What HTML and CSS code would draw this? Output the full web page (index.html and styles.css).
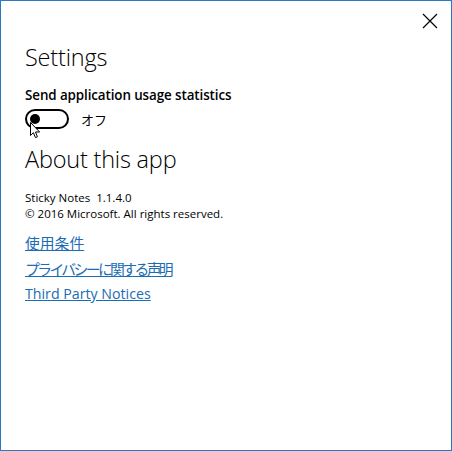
FILE: index.html
```html
<!DOCTYPE html>
<html lang="ja">
<head>
<meta charset="utf-8">
<link rel="stylesheet" href="styles.css">
</head>
<body>
<div class="window">
  <div class="titlebar">
    <button class="close" aria-label="Close">
      <svg width="16" height="16" viewBox="0 0 16 16"><path d="M1 1 L15 15 M15 1 L1 15" stroke="#000" stroke-width="1.2" fill="none"/></svg>
    </button>
  </div>
  <div class="content">
    <h1 class="heading">Settings</h1>
    <div class="label">Send application usage statistics</div>
    <div class="toggle-row">
      <span class="toggle">
        <span class="knob"></span>
        <svg class="cursor" width="11" height="17" viewBox="0 0 11 17"><path d="M0.5 0.5 L0.5 13.5 L3.4 10.7 L5.4 15.6 L7.4 14.8 L5.5 10 L9.6 10 Z" fill="#fff" stroke="#000" stroke-width="1" stroke-linejoin="miter"/></svg>
      </span>
      <span class="toggle-text">オフ</span>
    </div>
    <h1 class="heading about">About this app</h1>
    <div class="info first">Sticky Notes&nbsp; 1.1.4.0</div>
    <div class="info">© 2016 Microsoft. All rights reserved.</div>
    <div class="links">
      <a class="ja" href="#">使用条件</a>
      <a class="ja kana" href="#">プライバシーに関する声明</a>
      <a href="#">Third Party Notices</a>
    </div>
  </div>
</div>
</body>
</html>
```
FILE: styles.css
```css
html, body {
  margin: 0;
  padding: 0;
  background: #fff;
}
body {
  font-family: "Open Sans", "Noto Sans CJK JP", sans-serif;
  color: #000;
}
.window {
  box-sizing: border-box;
  width: 452px;
  height: 451px;
  border: 1px solid #2b79c2;
  background: #fff;
}
.titlebar {
  display: flex;
  justify-content: flex-end;
  height: 39px;
}
.close {
  border: 0;
  background: none;
  padding: 0;
  margin: 12px 13px 0 0;
  width: 16px;
  height: 16px;
  display: flex;
}
.content {
  padding: 0 0 0 24px;
}
.heading {
  margin: 1px 0 0;
  font-family: "Open Sans", sans-serif;
  font-weight: 300;
  font-size: 23.5px;
  line-height: 32px;
  color: #000;
  letter-spacing: -0.2px;
}
.label {
  margin-top: 13px;
  font-size: 13.4px;
  font-weight: 600;
  line-height: 18px;
  letter-spacing: -0.1px;
}
.toggle-row {
  display: flex;
  align-items: center;
  margin-top: 5px;
  height: 20px;
}
.toggle {
  position: relative;
  box-sizing: border-box;
  width: 44px;
  height: 20px;
  border: 2px solid #000;
  border-radius: 10px;
}
.knob {
  position: absolute;
  left: 3px;
  top: 3px;
  width: 10px;
  height: 10px;
  border-radius: 50%;
  background: #000;
}
.cursor {
  position: absolute;
  left: 3px;
  top: 11px;
}
.toggle-text {
  margin-left: 12px;
  font-family: "Noto Sans CJK JP", sans-serif;
  font-size: 13px;
}
.about {
  margin-top: 14px;
}
.info {
  font-size: 11.5px;
  line-height: 16px;
}
.info.first {
  margin-top: 15px;
}
.links {
  display: flex;
  flex-direction: column;
  align-items: flex-start;
  margin-top: 8px;
}
.links a {
  font-family: "Open Sans", "Noto Sans CJK JP", sans-serif;
  font-size: 14.2px;
  line-height: 25.5px;
  color: #1a6cb5;
  text-decoration: underline;
}
.links a.ja {
  font-family: "Noto Sans CJK JP", sans-serif;
  font-size: 14.8px;
}
.links a.kana {
  letter-spacing: -2.6px;
}
```
